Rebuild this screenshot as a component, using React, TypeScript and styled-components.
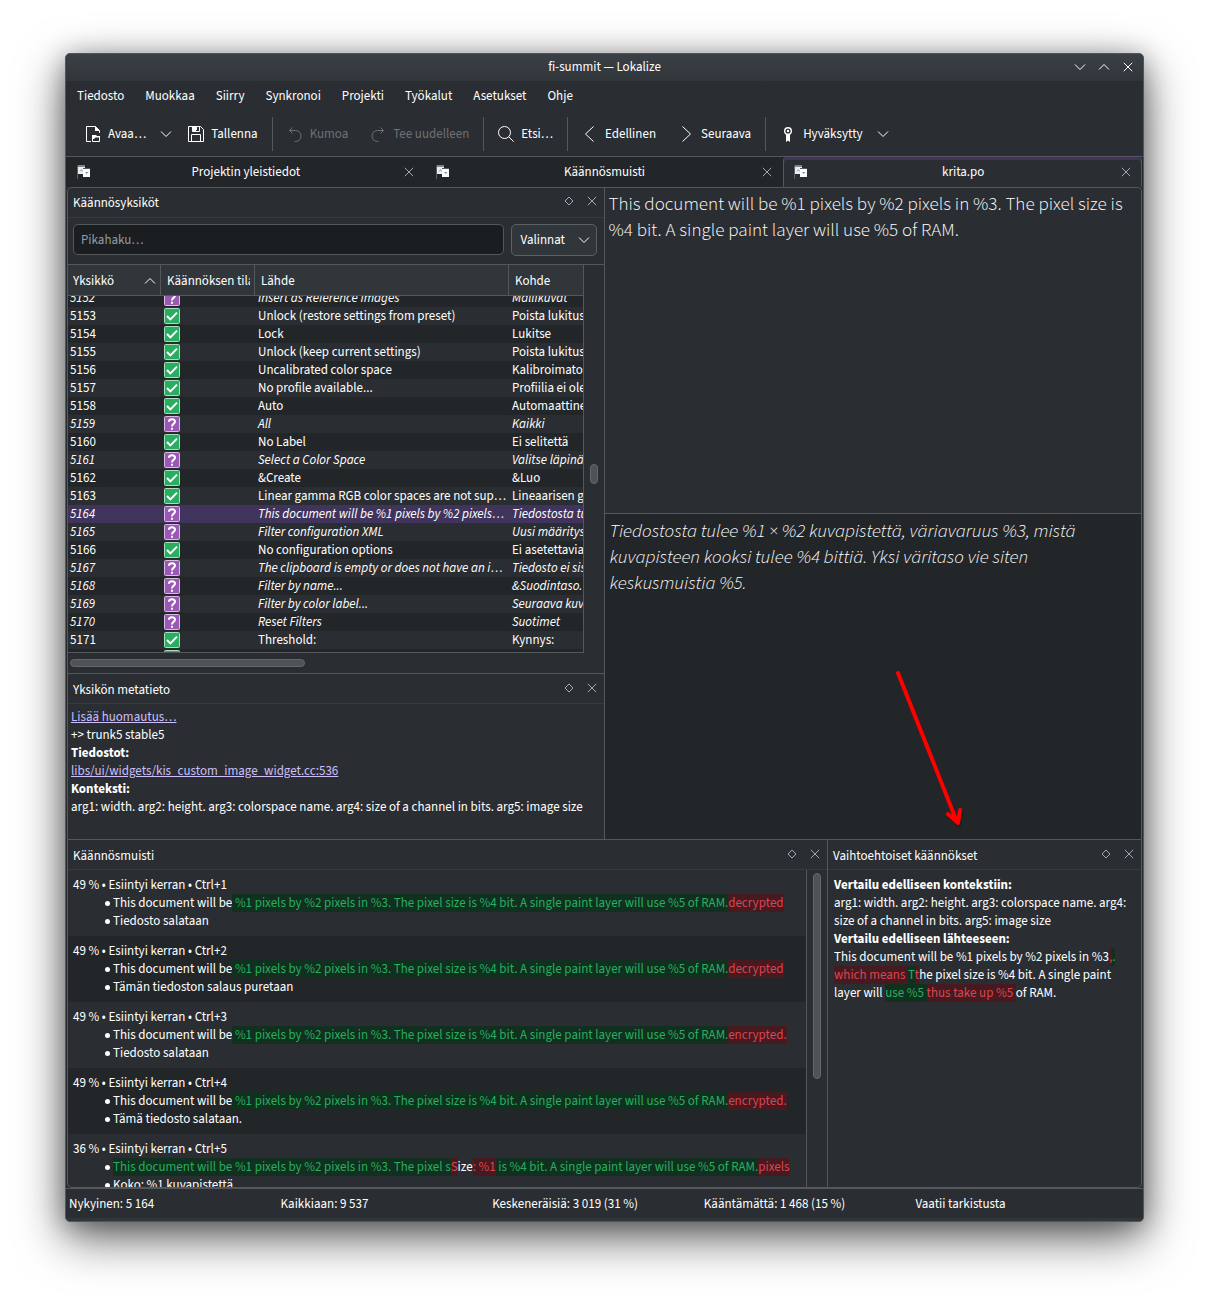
import React, { useLayoutEffect, useRef } from 'react';
import styled, { createGlobalStyle, css } from 'styled-components';

const c = {
  window: '#2a2e32',
  view: '#232629',
  alt: '#2a2d31',
  field: '#1b1e20',
  raised: '#31363b',
  line: '#54585b',
  faint: '#373b3f',
  text: '#ffffff',
  dim: '#6e7174',
  soft: '#a1a9b1',
  accent: '#40345c',
  link: '#cdbffa',
  green: '#27ae60',
  greenBg: '#11301f',
  red: '#da4453',
  redBg: '#461a1e',
};

const GlobalStyle = createGlobalStyle`
  *, *::before, *::after { box-sizing: border-box; }
  body {
    margin: 0;
    background: #fff;
    color: ${c.text};
    font: 400 13px/18px "Source Sans 3", "Noto Sans CJK JP", "Noto Sans", sans-serif;
  }
  button, input { font: inherit; color: inherit; }
  button { border: 0; background: none; padding: 0; }
`;

const Page = styled.div`
  padding: 53px 65px 77px;
`;

const Window = styled.main`
  border: 1px solid #51565a;
  border-radius: 5px;
  background: ${c.window};
  overflow: hidden;
  box-shadow: 0 16px 48px rgba(0, 0, 0, 0.6), 0 4px 24px rgba(0, 0, 0, 0.3);
`;

const TitleBar = styled.header`
  display: grid;
  grid-template-columns: 1fr auto 1fr;
  align-items: start;
  height: 27px;
  background: linear-gradient(#3b4046, #31363b);
`;

const Title = styled.h1`
  grid-column: 2;
  margin: 0;
  padding-top: 4px;
  font: inherit;
`;

const WindowButtons = styled.div`
  display: flex;
  justify-content: flex-end;
  padding: 1px 3px 0 0;
`;

const IconButton = styled.button<{ $w: number }>`
  display: flex;
  align-items: center;
  justify-content: center;
  width: ${(p) => p.$w}px;
  height: 24px;
  color: ${(p) => (p.$w < 24 ? c.soft : c.text)};
`;

const MenuBar = styled.nav`
  display: flex;
  gap: 1px;
  height: 29px;
  padding-left: 1px;
`;

const MenuItem = styled.button`
  padding: 0 10px;
`;

const Toolbar = styled.div`
  display: flex;
  align-items: center;
  height: 47px;
  padding: 2px 0 0 8px;
  border-bottom: 1px solid ${c.line};
`;

const ToolButton = styled.button`
  display: flex;
  align-items: center;
  gap: 7px;
  height: 34px;
  padding: 0 11px;
  white-space: nowrap;
  &:disabled { color: ${c.dim}; }
`;

const DropButton = styled.button`
  display: flex;
  align-items: center;
  justify-content: center;
  width: 20px;
  height: 34px;
  margin: 0 1px 0 -1px;
`;

const Separator = styled.span`
  width: 1px;
  height: 34px;
  margin: 0 3px;
  background: ${c.line};
`;

const TabBar = styled.div`
  display: grid;
  grid-template-columns: 1fr 1fr 1fr;
  height: 30px;
  padding-right: 1px;
  background: ${c.view};
`;

const Tab = styled.div<{ $active?: boolean }>`
  display: flex;
  align-items: center;
  padding: 0 5px 0 11px;
  ${(p) =>
    p.$active &&
    css`
      padding: 0 4px 0 10px;
      background: ${c.window};
      border: 1px solid ${c.line};
      border-width: 0 1px;
      border-radius: 4px 4px 0 0;
      box-shadow: inset 0 3px ${c.accent};
    `}
`;

const TabLabel = styled.button`
  flex: 1;
  text-align: center;
  padding-left: 3px;
`;

const Frame = styled.section<{ $cols: string; $last?: boolean }>`
  display: grid;
  grid-template-columns: ${(p) => p.$cols};
  margin: 0 1px;
  border: 1px solid ${c.line};
  border-bottom-width: ${(p) => (p.$last ? 1 : 0)}px;
  border-radius: ${(p) => (p.$last ? '0 0 5px 5px' : '5px 5px 0 0')};
  overflow: hidden;
`;

const Column = styled.div<{ $divided?: boolean }>`
  display: flex;
  flex-direction: column;
  min-width: 0;
  border-right: ${(p) => (p.$divided ? `1px solid ${c.line}` : '0')};
`;

const DockHeader = styled.div<{ $first: boolean }>`
  display: flex;
  align-items: flex-start;
  gap: 1px;
  height: 30px;
  padding: ${(p) => (p.$first ? 1 : 2)}px 1px 0 5px;
  border-bottom: 1px solid ${c.faint};
`;

const DockTitle = styled.h2`
  flex: 1;
  margin: 0;
  padding-top: 5px;
  font: inherit;
`;

const SearchRow = styled.form`
  display: flex;
  align-items: flex-start;
  gap: 7px;
  padding: 6px 7px 8px 5px;
  border-bottom: 1px solid ${c.line};
`;

const SearchField = styled.input`
  flex: 1;
  min-width: 0;
  height: 31px;
  padding: 0 7px;
  border: 1px solid ${c.line};
  border-radius: 5px;
  background: ${c.field};
  &::placeholder { color: ${c.soft}; opacity: 0.9; }
`;

const OptionsButton = styled.button`
  display: flex;
  align-items: center;
  justify-content: space-between;
  width: 86px;
  height: 32px;
  padding: 0 6px 0 9px;
  border: 1px solid #5c6165;
  border-radius: 5px;
  background: ${c.raised};
`;

const TableArea = styled.div`
  display: grid;
  grid-template-columns: 1fr 20px;
`;

const TableScroll = styled.div`
  height: 388px;
  overflow: hidden;
  border: 1px solid ${c.line};
  border-width: 0 1px 1px 0;
`;

const Table = styled.table`
  width: 100%;
  table-layout: fixed;
  border-collapse: separate;
  border-spacing: 0;
`;

const HeadCell = styled.th`
  position: sticky;
  top: 0;
  height: 31px;
  padding: 2px 4px 0 6px;
  border: 1px solid ${c.line};
  border-width: 0 1px 1px 0;
  background: ${c.raised};
  font-weight: inherit;
  text-align: left;
  &:first-child { padding-left: 5px; }
  &:last-child { border-right: 0; }
`;

const HeadLabel = styled.span`
  display: flex;
  align-items: center;
  justify-content: space-between;
  overflow: hidden;
  white-space: nowrap;
`;

const Row = styled.tr<{ $fuzzy: boolean; $selected: boolean }>`
  font-style: ${(p) => (p.$fuzzy ? 'italic' : 'normal')};
  background: ${c.view};
  &:nth-child(even) { background: ${c.alt}; }
  && { ${(p) => p.$selected && `background: ${c.accent};`} }
`;

const Cell = styled.td`
  height: 18px;
  padding: 0 0 0 3px;
  overflow: hidden;
  white-space: nowrap;
  &:first-child { padding-left: 2px; }
  & > svg { display: block; }
`;

const ScrollTrack = styled.div<{ $pad: string }>`
  display: flex;
  padding: ${(p) => p.$pad};
`;

const Thumb = styled.div<{ $w: number; $h: number }>`
  width: ${(p) => p.$w}px;
  height: ${(p) => p.$h}px;
  border: 1px solid #64686b;
  border-radius: 4px;
  background: #4f5356;
`;

const MetaDock = styled.div`
  border-top: 1px solid ${c.line};
`;

const Notes = styled.div<{ $pad: string }>`
  padding: ${(p) => p.$pad};
  & p { margin: 0; }
  & a { color: ${c.link}; }
  & b { font-weight: 700; }
`;

const Editor = styled.div<{ $target?: boolean }>`
  position: relative;
  flex: 1;
  padding: ${(p) => (p.$target ? '5px 5px 3px' : '4px')};
  border-top: ${(p) => (p.$target ? `1px solid ${c.line}` : '0')};
  background: ${(p) => (p.$target ? c.view : c.window)};
  font-size: 19px;
  font-weight: 300;
  line-height: 26px;
  font-style: ${(p) => (p.$target ? 'italic' : 'normal')};
  & p { margin: 0; }
`;

const Pointer = styled.svg`
  position: absolute;
  right: 166px;
  bottom: 5px;
  overflow: visible;
`;

const MemoryArea = styled.div`
  display: grid;
  grid-template-columns: 1fr 20px;
  height: 317px;
`;

const MemoryList = styled.ol`
  margin: 0;
  padding: 0;
  list-style: none;
  overflow: hidden;
  border-right: 1px solid ${c.line};
`;

const MemoryItem = styled.li`
  padding: 6px 0 6px 5px;
  white-space: nowrap;
  &:nth-child(even) { background: ${c.view}; }
`;

const MemoryLines = styled.ul`
  margin: 0;
  padding: 0 0 0 32px;
  list-style: none;
`;

const MemoryLine = styled.li`
  display: flex;
  align-items: center;
  white-space: pre;
  &::before {
    content: '';
    flex: none;
    width: 5px;
    height: 5px;
    margin-right: 3px;
    border-radius: 50%;
    background: ${c.text};
  }
`;

const Added = styled.ins`
  color: ${c.green};
  background: ${c.greenBg};
  text-decoration: none;
`;

const Removed = styled.del`
  color: ${c.red};
  background: ${c.redBg};
  text-decoration: none;
`;

const StatusBar = styled.footer`
  display: grid;
  grid-template-columns: repeat(5, 1fr);
  padding: 6px 16px 5px 3px;
  border-top: 1px solid ${c.line};
  border-bottom: 3px solid ${c.raised};
  white-space: nowrap;
`;

const Glyph = ({ d, w = 16, h = 16 }: { d: string; w?: number; h?: number }) => (
  <svg width={w} height={h} viewBox={`0 0 ${w} ${h}`} fill="none" stroke="currentColor" aria-hidden="true">
    <path d={d} />
  </svg>
);

const ChevronDown = () => <Glyph w={12} h={8} d="M1 1.5 L6 6.5 L11 1.5" />;
const ChevronUp = () => <Glyph w={12} h={8} d="M1 6.5 L6 1.5 L11 6.5" />;
const Cross = () => <Glyph w={10} h={10} d="M.8 .8 L9.2 9.2 M9.2 .8 L.8 9.2" />;
const Diamond = () => <Glyph w={10} h={10} d="M5 1 L9 5 L5 9 L1 5 Z" />;

const OpenIcon = () => (
  <svg width="16" height="16" viewBox="0 0 16 16" aria-hidden="true">
    <path d="M6 15.5 H1.5 V.5 H10.5 L14.5 4.5 V7" fill="none" stroke="currentColor" />
    <path d="M10 0 V5 H15 Z" fill="currentColor" />
    <path d="M7.5 9 V15.5 H14.5 V10.5 H11 L10 9.5 H7.5" fill="none" stroke="currentColor" />
    <path d="M7 9 H11 L12 10 H15 V11.5 H10.5 L9 13 H7 Z" fill="currentColor" />
  </svg>
);

const SaveIcon = () => (
  <svg width="16" height="16" viewBox="0 0 16 16" aria-hidden="true">
    <path d="M.5 .5 H12.5 L15.5 3.5 V15.5 H.5 Z M3.5 15.5 V8.5 H12.5 V15.5" fill="none" stroke="currentColor" />
    <path d="M4.5 .5 V5.5 H11.5 V.5" fill="none" stroke="currentColor" />
    <path d="M4 0 H9 V4 H8 V5 H4 Z M11 0 H12 V5 H11 Z" fill="currentColor" />
  </svg>
);

const UndoIcon = () => <Glyph d="M5.5 1.5 L2.5 4.5 L5.5 7.5 M2.5 4.5 H8.5 A5 5 0 0 1 8.5 15.5 H7.5" />;
const RedoIcon = () => <Glyph d="M10.5 1.5 L13.5 4.5 L10.5 7.5 M13.5 4.5 H7.5 A5 5 0 0 0 7.5 15.5 H8.5" />;

const SearchIcon = () => (
  <svg width="16" height="16" viewBox="0 0 16 16" fill="none" stroke="currentColor" aria-hidden="true">
    <circle cx="6.5" cy="6.5" r="6" />
    <path d="M10.8 10.8 L15.7 15.7" />
  </svg>
);

const PrevIcon = () => <Glyph d="M11.5 .5 L3.5 8 L11.5 15.5" />;
const NextIcon = () => <Glyph d="M4.5 .5 L12.5 8 L4.5 15.5" />;

const ApprovedIcon = () => (
  <svg width="16" height="16" viewBox="0 0 16 16" aria-hidden="true">
    <circle cx="8" cy="5" r="3.3" fill="none" stroke="currentColor" strokeWidth="1.4" />
    <circle cx="8" cy="5" r="1.2" fill="currentColor" />
    <path d="M6 8 H10 V16 L8 14.6 L6 16 Z" fill="currentColor" />
  </svg>
);

const FileIcon = () => (
  <svg width="14" height="16" viewBox="0 0 14 16" aria-hidden="true">
    <path d="M.5 1.5 V15" stroke="#5a6066" />
    <rect x="1" y="1" width="7" height="4" fill="#7d868c" />
    <rect x="1" y="3" width="7" height="7" fill="#eceff1" />
    <path d="M3 7.5 L4.5 5.5 L5.5 7.5" fill="none" stroke="#9aa2a8" />
    <rect x="6" y="4" width="7" height="2" fill="#4d5a66" />
    <rect x="6" y="5" width="7" height="8" fill="#fcfcfc" />
    <path d="M8 8 H11.5 L9.7 10 Z" fill="#8c9499" />
  </svg>
);

const StateIcon = ({ fuzzy }: { fuzzy: boolean }) => (
  <svg width="16" height="16" viewBox="0 0 16 16" role="img" aria-label={fuzzy ? 'Keskeneräinen' : 'Valmis'}>
    <rect x=".5" y=".5" width="15" height="15" rx="1" fill={fuzzy ? '#9b59b6' : '#27ae60'} stroke={fuzzy ? '#d7bde2' : '#a9dfbf'} />
    {fuzzy ? (
      <g fill="none" stroke="#fff" strokeWidth="2">
        <path d="M4.9 5.8 C4.9 2.4 11.1 2.4 11.1 5.6 C11.1 7.8 8 7.6 8 10.6" />
        <path d="M8 11.8 V13.8" />
      </g>
    ) : (
      <path d="M3 8 L6.4 11.4 L13 4.6" fill="none" stroke="#fff" strokeWidth="2" />
    )}
  </svg>
);

type Unit = [id: number, fuzzy: boolean, source: string, target: string];

const units: Unit[] = [
  [5152, true, 'Insert as Reference Images', 'Mallikuvat'],
  [5153, false, 'Unlock (restore settings from preset)', 'Poista lukitus'],
  [5154, false, 'Lock', 'Lukitse'],
  [5155, false, 'Unlock (keep current settings)', 'Poista lukitus'],
  [5156, false, 'Uncalibrated color space', 'Kalibroimato'],
  [5157, false, 'No profile available...', 'Profiilia ei ole'],
  [5158, false, 'Auto', 'Automaattine'],
  [5159, true, 'All', 'Kaikki'],
  [5160, false, 'No Label', 'Ei selitettä'],
  [5161, true, 'Select a Color Space', 'Valitse läpinä'],
  [5162, false, '&Create', '&Luo'],
  [5163, false, 'Linear gamma RGB color spaces are not sup…', 'Lineaarisen g'],
  [5164, true, 'This document will be %1 pixels by %2 pixels…', 'Tiedostosta tu'],
  [5165, true, 'Filter configuration XML', 'Uusi määritys'],
  [5166, false, 'No configuration options', 'Ei asetettavia'],
  [5167, true, 'The clipboard is empty or does not have an i…', 'Tiedosto ei sis'],
  [5168, true, 'Filter by name...', '&Suodintaso.'],
  [5169, true, 'Filter by color label...', 'Seuraava kuv'],
  [5170, true, 'Reset Filters', 'Suotimet'],
  [5171, false, 'Threshold:', 'Kynnys:'],
  [5172, false, '', ''],
];

const SELECTED = 5164;
const SCROLL_TOP = 7;

const UnitTable = () => {
  const scroller = useRef<HTMLDivElement>(null);
  useLayoutEffect(() => {
    if (scroller.current) scroller.current.scrollTop = SCROLL_TOP;
  }, []);
  return (
    <TableScroll ref={scroller}>
      <Table>
        <colgroup>
          <col width="93" />
          <col width="94" />
          <col width="254" />
          <col />
        </colgroup>
        <thead>
          <tr>
            <HeadCell><HeadLabel>Yksikkö <ChevronUp /></HeadLabel></HeadCell>
            <HeadCell><HeadLabel>Käännöksen tila</HeadLabel></HeadCell>
            <HeadCell><HeadLabel>Lähde</HeadLabel></HeadCell>
            <HeadCell><HeadLabel>Kohde</HeadLabel></HeadCell>
          </tr>
        </thead>
        <tbody>
          {units.map(([id, fuzzy, source, target]) => (
            <Row key={id} $fuzzy={fuzzy} $selected={id === SELECTED}>
              <Cell>{id}</Cell>
              <Cell><StateIcon fuzzy={fuzzy} /></Cell>
              <Cell>{source}</Cell>
              <Cell>{target}</Cell>
            </Row>
          ))}
        </tbody>
      </Table>
    </TableScroll>
  );
};

const Dock = ({ title, first = false }: { title: string; first?: boolean }) => (
  <DockHeader $first={first}>
    <DockTitle>{title}</DockTitle>
    <IconButton $w={22} aria-label="Irrota"><Diamond /></IconButton>
    <IconButton $w={22} aria-label="Sulje"><Cross /></IconButton>
  </DockHeader>
);

const addition = '%1 pixels by %2 pixels in %3. The pixel size is %4 bit. A single paint layer will use %5 of RAM.';

const memory: [removed: string, translation: string][] = [
  ['decrypted', 'Tiedosto salataan'],
  ['decrypted', 'Tämän tiedoston salaus puretaan'],
  ['encrypted.', 'Tiedosto salataan'],
  ['encrypted.', 'Tämä tiedosto salataan.'],
];

const tabs = ['Projektin yleistiedot', 'Käännösmuisti', 'krita.po'];
const menus = ['Tiedosto', 'Muokkaa', 'Siirry', 'Synkronoi', 'Projekti', 'Työkalut', 'Asetukset', 'Ohje'];
const status = [
  'Nykyinen: 5 164',
  'Kaikkiaan: 9 537',
  'Keskeneräisiä: 3 019 (31 %)',
  'Kääntämättä: 1 468 (15 %)',
  'Vaatii tarkistusta',
];

export default function App() {
  return (
    <Page>
      <GlobalStyle />
      <Window>
        <TitleBar>
          <Title>fi-summit — Lokalize</Title>
          <WindowButtons>
            <IconButton $w={24} aria-label="Pienennä"><ChevronDown /></IconButton>
            <IconButton $w={24} aria-label="Suurenna"><ChevronUp /></IconButton>
            <IconButton $w={24} aria-label="Sulje"><Cross /></IconButton>
          </WindowButtons>
        </TitleBar>

        <MenuBar>
          {menus.map((m) => <MenuItem key={m}>{m}</MenuItem>)}
        </MenuBar>

        <Toolbar>
          <ToolButton><OpenIcon />Avaa…</ToolButton>
          <DropButton aria-label="Viimeisimmät"><ChevronDown /></DropButton>
          <ToolButton><SaveIcon />Tallenna</ToolButton>
          <Separator />
          <ToolButton disabled><UndoIcon />Kumoa</ToolButton>
          <ToolButton disabled><RedoIcon />Tee uudelleen</ToolButton>
          <Separator />
          <ToolButton><SearchIcon />Etsi…</ToolButton>
          <Separator />
          <ToolButton><PrevIcon />Edellinen</ToolButton>
          <ToolButton><NextIcon />Seuraava</ToolButton>
          <Separator />
          <ToolButton><ApprovedIcon />Hyväksytty</ToolButton>
          <DropButton aria-label="Tila"><ChevronDown /></DropButton>
        </Toolbar>

        <TabBar>
          {tabs.map((t) => (
            <Tab key={t} $active={t === 'krita.po'}>
              <FileIcon />
              <TabLabel>{t}</TabLabel>
              <IconButton $w={22} aria-label="Sulje välilehti"><Cross /></IconButton>
            </Tab>
          ))}
        </TabBar>

        <Frame $cols="1fr 1fr">
          <Column $divided>
            <Dock title="Käännösyksiköt" first />
            <SearchRow>
              <SearchField aria-label="Pikahaku" placeholder="Pikahaku…" />
              <OptionsButton type="button">Valinnat <ChevronDown /></OptionsButton>
            </SearchRow>
            <TableArea>
              <UnitTable />
              <ScrollTrack $pad="199px 6px 0"><Thumb $w={8} $h={20} /></ScrollTrack>
            </TableArea>
            <ScrollTrack $pad="6px 2px"><Thumb $w={235} $h={8} /></ScrollTrack>
            <MetaDock>
              <Dock title="Yksikön metatieto" />
              <Notes $pad="4px 3px 23px">
                <p><a href="#note">Lisää huomautus…</a></p>
                <p>+&gt; trunk5 stable5</p>
                <p><b>Tiedostot:</b></p>
                <p><a href="#file">libs/ui/widgets/kis_custom_image_widget.cc:536</a></p>
                <p><b>Konteksti:</b></p>
                <p>arg1: width. arg2: height. arg3: colorspace name. arg4: size of a channel in bits. arg5: image size</p>
              </Notes>
            </MetaDock>
          </Column>
          <Column>
            <Editor>
              <p>This document will be %1 pixels by %2 pixels in %3. The pixel size is %4 bit. A single paint layer will use %5 of RAM.</p>
            </Editor>
            <Editor $target>
              <p>Tiedostosta tulee %1 × %2 kuvapistettä, väriavaruus %3, mistä kuvapisteen kooksi tulee %4 bittiä. Yksi väritaso vie siten keskusmuistia %5.</p>
              <Pointer width="90" height="165" viewBox="0 0 90 165" fill="none" stroke="#ff0000" strokeLinecap="round" strokeLinejoin="round" aria-hidden="true">
                <g stroke="#15181a" strokeOpacity=".6" strokeWidth="4" transform="translate(1 2)">
                  <path d="M13 4 L72 153 M63 145 L73 154 L75 141" />
                </g>
                <path d="M13 4 L72 153 M63 145 L73 154 L75 141" strokeWidth="4" />
              </Pointer>
            </Editor>
          </Column>
        </Frame>

        <Frame $cols="1fr 313px" $last>
          <Column $divided>
            <Dock title="Käännösmuisti" />
            <MemoryArea>
              <MemoryList>
                {memory.map(([removed, translation], i) => (
                  <MemoryItem key={i}>
                    49 % • Esiintyi kerran • Ctrl+{i + 1}
                    <MemoryLines>
                      <MemoryLine>
                        <span>This document will be<Added> {addition}</Added><Removed>{removed}</Removed></span>
                      </MemoryLine>
                      <MemoryLine><span>{translation}</span></MemoryLine>
                    </MemoryLines>
                  </MemoryItem>
                ))}
                <MemoryItem>
                  36 % • Esiintyi kerran • Ctrl+5
                  <MemoryLines>
                    <MemoryLine>
                      <span>
                        <Added>This document will be %1 pixels by %2 pixels in %3. The pixel s</Added>
                        <Removed>S</Removed>ize<Removed>: %1</Removed>
                        <Added> is %4 bit. A single paint layer will use %5 of RAM.</Added>
                        <Removed>pixels</Removed>
                      </span>
                    </MemoryLine>
                    <MemoryLine><span>Koko: %1 kuvapistettä</span></MemoryLine>
                  </MemoryLines>
                </MemoryItem>
              </MemoryList>
              <ScrollTrack $pad="3px 6px"><Thumb $w={8} $h={206} /></ScrollTrack>
            </MemoryArea>
          </Column>
          <Column>
            <Dock title="Vaihtoehtoiset käännökset" />
            <Notes $pad="6px">
              <p><b>Vertailu edelliseen kontekstiin:</b></p>
              <p>arg1: width. arg2: height. arg3: colorspace name. arg4: size of a channel in bits. arg5: image size</p>
              <p><b>Vertailu edelliseen lähteeseen:</b></p>
              <p>
                This document will be %1 pixels by %2 pixels in %3<Removed>,</Removed><Added>.</Added>{' '}
                <Removed>which means </Removed><Added>T</Added><Removed>t</Removed>he pixel size is %4 bit. A single paint layer will{' '}
                <Added>use %5 </Added><Removed>thus take up %5 </Removed>of RAM.
              </p>
            </Notes>
          </Column>
        </Frame>

        <StatusBar>
          {status.map((s) => <span key={s}>{s}</span>)}
        </StatusBar>
      </Window>
    </Page>
  );
}
